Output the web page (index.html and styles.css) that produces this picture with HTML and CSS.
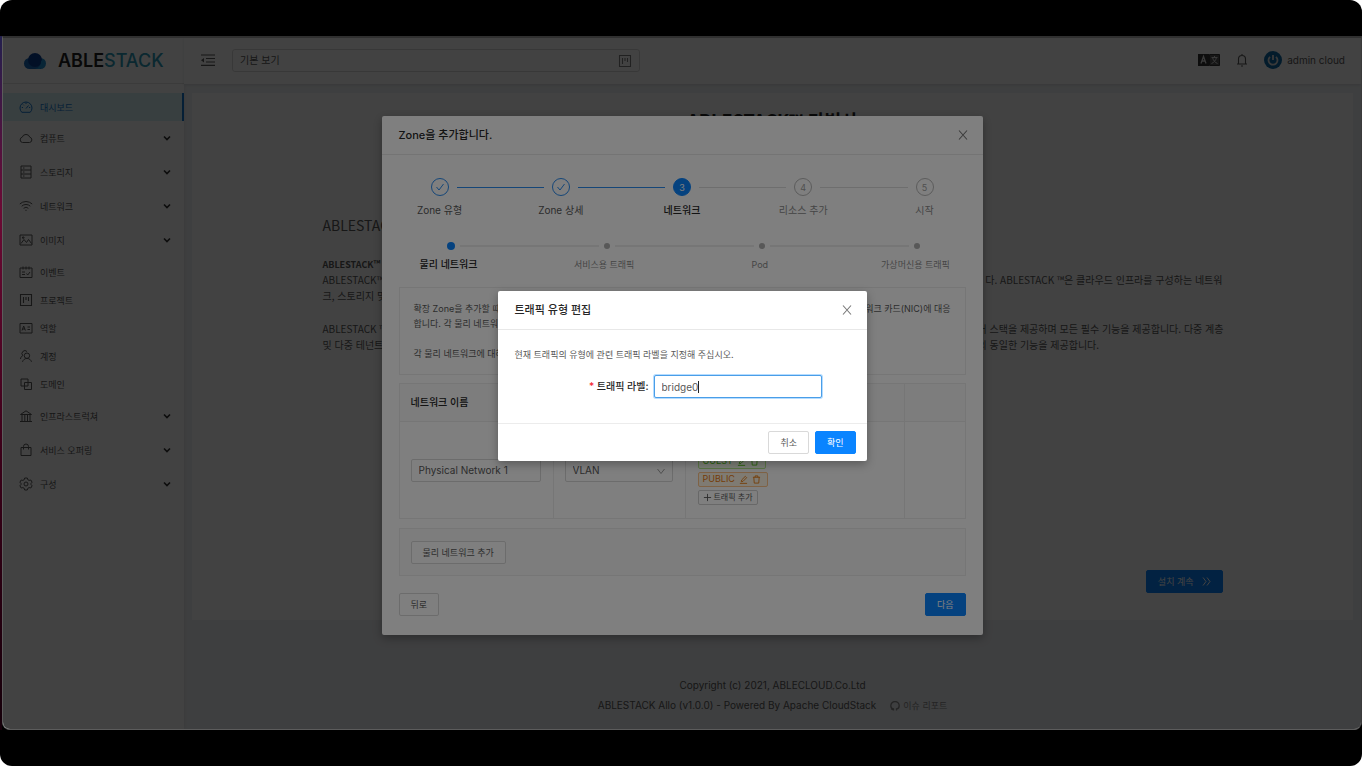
FILE: index.html
```html
<!DOCTYPE html>
<html lang="ko">
<head>
<meta charset="utf-8">
<title>ABLESTACK</title>
<link rel="stylesheet" href="styles.css">
</head>
<body>
<svg class="defs" aria-hidden="true">
  <symbol id="chev" viewBox="0 0 10 10"><path d="M2 3.500l3 3 3-3" fill="none" stroke="currentColor" stroke-width="1.700"/></symbol>
  <symbol id="thin-chev" viewBox="0 0 10 10"><path d="M1.500 3l3.500 4.500L8.500 3" fill="none" stroke="currentColor"/></symbol>
  <symbol id="close" viewBox="0 0 12 12"><path d="M2 1.500l8 9M10 1.500l-8 9" fill="none" stroke="currentColor" stroke-width="1.100"/></symbol>
  <symbol id="project" viewBox="0 0 14 14"><path d="M1.500 1.500h11v11h-11zM4.500 4v6M7 4v3M9.500 4v4" fill="none" stroke="currentColor" stroke-width="1.100"/></symbol>
  <symbol id="check" viewBox="0 0 10 10"><path d="M1.500 5l2.500 3 4.500-6" fill="none" stroke="currentColor"/></symbol>
  <symbol id="edit" viewBox="0 0 10 10"><path d="M2.500 7.500l.5-2L7 1.500l1.500 1.500-4 4zM1 9.300h8" fill="none" stroke="currentColor"/></symbol>
  <symbol id="trash" viewBox="0 0 10 10"><path d="M1 2.500h8M3.500 2.500v-1.500h3v1.500M2 2.500l.5 6.500h5l.5-6.500" fill="none" stroke="currentColor"/></symbol>
</svg>
<div class="screen">
  <div class="edge"></div>
  <div class="app">
    <aside class="side">
      <a class="logo" href="#">
        <svg width="24" height="18" viewBox="0 0 24 18"><circle cx="6.500" cy="11.500" r="5.500" fill="#1769b8"/><circle cx="17.500" cy="11.500" r="5.500" fill="#1f8fd0"/><path d="M6 11h12v6H6z" fill="#1769b8"/><circle cx="12" cy="8" r="7" fill="#0b3f94"/><path d="M12 17a8 8 0 0 0 6-9 5.500 5.500 0 0 1-1 9z" fill="#1f8fd0"/></svg>
        <span><b>ABLE</b><i>STACK</i></span>
      </a>
      <nav>
        <ul class="menu">
          <li><a class="item on" href="#"><svg viewBox="0 0 14 14"><path d="M2.800 12.300a6 6 0 1 1 8.400 0zM7 8.500l2.500-3M7 2.500v1.500M2.800 7.500h1.200M10 7.500h1.200M4 4.500l.8.8" /></svg>대시보드</a></li>
          <li><a class="item sub" href="#"><svg viewBox="0 0 14 14"><path d="M3.500 11.500a2.700 2.700 0 0 1-.3-5.300 4 4 0 0 1 7.600 0 2.700 2.700 0 0 1-.3 5.300z"/></svg>컴퓨트<svg class="arrow"><use href="#chev"/></svg></a></li>
          <li><a class="item sub" href="#"><svg viewBox="0 0 14 14"><path d="M2 1h10v12H2zM2 5h10M2 9h10M4 3h1.500M4 7h1.500M4 11h1.500"/></svg>스토리지<svg class="arrow"><use href="#chev"/></svg></a></li>
          <li><a class="item sub" href="#"><svg viewBox="0 0 14 14"><path d="M.8 5a9 9 0 0 1 12.400 0M2.700 7.200a6.200 6.200 0 0 1 8.600 0M4.600 9.300a3.500 3.500 0 0 1 4.800 0M6.400 11.300h1.200"/></svg>네트워크<svg class="arrow"><use href="#chev"/></svg></a></li>
          <li><a class="item sub" href="#"><svg viewBox="0 0 14 14"><path d="M1 2h12v10H1zM2 10.500l3-4 2.500 3 2-3 3 4M3.500 4h1.500v1.200H3.500z"/></svg>이미지<svg class="arrow"><use href="#chev"/></svg></a></li>
        </ul>
        <ul class="menu plain">
          <li><a class="item" href="#"><svg viewBox="0 0 14 14"><path d="M1 3h12v9.500H1zM4 1.500v3M7 1.500v3M10 1.500v3M3 7h3M3 9.500h3M7.500 8.500l1.200 1.500 2.300-3"/></svg>이벤트</a></li>
          <li><a class="item" href="#"><svg><use href="#project"/></svg>프로젝트</a></li>
          <li><a class="item" href="#"><svg viewBox="0 0 14 14"><path d="M1 2.500h12v9.500H1zM3 9.500l1.700-4.500 1.700 4.500M3.500 8h2.500M8.500 6h2.500M8.500 8.500h2.500"/></svg>역할</a></li>
          <li><a class="item" href="#"><svg viewBox="0 0 14 14"><path d="M8 4a2.700 2.700 0 1 1-.1 5.400A2.700 2.700 0 0 1 8 4zM3.500 12.800c.6-2 2.400-3.400 4.500-3.400s3.900 1.400 4.500 3.400M1.500 10c.2-1.700 1-2.800 2.300-3.400A2.700 2.700 0 1 1 8 2.500"/></svg>계정</a></li>
          <li><a class="item" href="#"><svg viewBox="0 0 14 14"><path d="M2 2h7v7H2zM5.500 5.500h7v7h-7z"/></svg>도메인</a></li>
        </ul>
        <ul class="menu">
          <li><a class="item sub" href="#"><svg viewBox="0 0 14 14"><path d="M1.500 5.500L7 1.800l5.500 3.700zM3 6v6M5.800 6v6M8.500 6v6M11 6v6M1 12.500h12"/></svg>인프라스트럭쳐<svg class="arrow"><use href="#chev"/></svg></a></li>
          <li><a class="item sub" href="#"><svg viewBox="0 0 14 14"><path d="M2 4.500h10v8H2zM4.500 6.500v-3a2.500 2.500 0 0 1 5 0v3"/></svg>서비스 오퍼링<svg class="arrow"><use href="#chev"/></svg></a></li>
          <li><a class="item sub" href="#"><svg viewBox="0 0 14 14"><path d="M5.700 1h2.600l.5 1.700 1.300.7 1.700-.4 1.300 2.200L12 6.500v1l1.100 1.300-1.300 2.200-1.700-.4-1.300.7-.5 1.700H5.700l-.5-1.700-1.300-.7-1.700.4L.9 8.800 2 7.500v-1L.9 5.200 2.200 3l1.700.4 1.300-.7z"/><circle cx="7" cy="7" r="2"/></svg>구성<svg class="arrow"><use href="#chev"/></svg></a></li>
        </ul>
      </nav>
    </aside>
    <div class="main">
      <header class="top">
        <button class="bare" aria-label="메뉴 접기"><svg width="14" height="12" viewBox="0 0 14 12"><path d="M0 1h14M5 4.500h9M5 8h9M0 11.400h14" stroke="currentColor" stroke-width="1.200"/><path d="M3 4v4.500L0 6.200z" fill="currentColor"/></svg></button>
        <div class="view"><select aria-label="보기"><option>기본 보기</option></select><svg><use href="#project"/></svg></div>
        <div class="tools">
          <button class="bare" aria-label="언어"><svg width="22" height="12" viewBox="0 0 22 12"><path d="M0 0h11v12H0z" fill="#333"/><path d="M11.500.5h10v11h-10z" fill="#555" stroke="#333"/><path d="M3 9.500l2.500-7 2.500 7M4 7h3" fill="none" stroke="#ddd" stroke-width="1.300"/><path d="M13.500 3.500h6M16.500 2v1.500M18.500 3.500c-.8 3-2.500 5-5 6M14.500 3.500c.8 3 2.500 5 5 6" fill="none" stroke="#ddd"/></svg></button>
          <button class="bare" aria-label="알림"><svg width="12" height="14" viewBox="0 0 12 14"><path d="M1 11h10M2.500 11V6a3.500 3.500 0 0 1 7 0v5M6 1v1.500M5 13h2" fill="none" stroke="currentColor" stroke-width="1.100"/></svg></button>
          <a class="user" href="#"><svg width="18" height="18" viewBox="0 0 18 18"><circle cx="9" cy="9" r="9" fill="#0d6aa8"/><path d="M6 5.800a4.500 4.500 0 1 0 6 0" fill="none" stroke="#ddd" stroke-width="1.800"/><path d="M9 4v5" stroke="#ddd" stroke-width="1.800"/></svg>admin cloud</a>
        </div>
      </header>
      <main class="card">
        <h1>ABLESTACK™ 마법사</h1>
        <div class="intro">
          <h2>ABLESTACK™</h2>
          <h3>ABLESTACK™ 소개</h3>
          <p><span>ABLESTACK™은</span><span class="end">다. ABLESTACK ™은 클라우드 인프라를 구성하는 네트워</span></p>
          <p class="last"><span>크, 스토리지 및</span></p>
          <p><span>ABLESTACK ™은</span><span class="end">어 스택을 제공하며 모든 필수 기능을 제공합니다. 다중 계층</span></p>
          <p><span>및 다중 테넌트</span><span>의 동일한 기능을 제공합니다.</span></p>
          <button class="btn primary go">설치 계속<svg width="9" height="9" viewBox="0 0 9 9"><path d="M1 .5l3 4-3 4M5 .5l3 4-3 4" fill="none" stroke="currentColor"/></svg></button>
        </div>
      </main>
      <footer class="foot">
        <div>Copyright (c) 2021, ABLECLOUD.Co.Ltd</div>
        <div class="line2"><span>ABLESTACK Allo (v1.0.0) - Powered By Apache CloudStack</span><a href="#"><svg width="10" height="10" viewBox="0 0 10 10"><path d="M3.500 9.500V8C1.500 7.600.8 6.200.8 4.700a4.200 4.200 0 0 1 8.400 0C9.200 6.200 8.500 7.600 6.500 8v1.500M3.500 8.600c-1 .3-1.600-.1-2.200-1" fill="none" stroke="currentColor" stroke-width="1.300"/></svg>이슈 리포트</a></div>
      </footer>
    </div>

    <div class="mask outer">
      <section class="dialog zone" role="dialog" aria-label="Zone을 추가합니다.">
        <div class="head"><strong>Zone을 추가합니다.</strong><button class="bare" aria-label="닫기"><svg width="12" height="12"><use href="#close"/></svg></button></div>
        <div class="body">
          <div class="rail">
            <span class="num done"><svg width="10" height="10"><use href="#check"/></svg></span><hr class="done"><span class="num done"><svg width="10" height="10"><use href="#check"/></svg></span><hr class="done"><span class="num now">3</span><hr><span class="num">4</span><hr><span class="num">5</span>
          </div>
          <ol class="names"><li class="done">Zone 유형</li><li class="done">Zone 상세</li><li class="now">네트워크</li><li>리소스 추가</li><li>시작</li></ol>
          <div class="dots"><span class="dot now"></span><hr><span class="dot"></span><hr><span class="dot"></span><hr><span class="dot"></span></div>
          <ol class="names wide"><li class="now">물리 네트워크</li><li>서비스용 트래픽</li><li>Pod</li><li>가상머신용 트래픽</li></ol>
          <div class="note">
            <p><span>확장 Zone을 추가할 때</span><span>네트워크 카드(NIC)에 대응</span></p>
            <p><span>합니다. 각 물리 네트워크</span></p>
            <p class="gap"><span>각 물리 네트워크에 대해</span></p>
          </div>
          <table>
            <colgroup><col class="c1"><col class="c2"><col class="c3"><col class="c4"></colgroup>
            <thead><tr><th>네트워크 이름</th><th></th><th></th><th></th></tr></thead>
            <tbody><tr>
              <td><input class="field" aria-label="네트워크 이름" value="Physical Network 1"></td>
              <td><div class="pick"><select class="field" aria-label="격리 방법"><option>VLAN</option></select><svg><use href="#thin-chev"/></svg></div></td>
              <td><div class="tags">
                <span class="tag blue">MANAGEMENT</span>
                <span class="tag green">GUEST<svg><use href="#edit"/></svg><svg><use href="#trash"/></svg></span>
                <span class="tag orange">PUBLIC<svg><use href="#edit"/></svg><svg><use href="#trash"/></svg></span>
                <button class="tag add"><svg viewBox="0 0 10 10"><path d="M5 1v8M1 5h8" stroke="currentColor"/></svg>트래픽 추가</button>
              </div></td>
              <td></td>
            </tr></tbody>
          </table>
          <div class="more"><button class="btn">물리 네트워크 추가</button></div>
          <div class="acts"><button class="btn">뒤로</button><button class="btn primary">다음</button></div>
        </div>
      </section>
    </div>

    <div class="mask inner">
      <section class="dialog label" role="dialog" aria-label="트래픽 유형 편집">
        <div class="head"><strong>트래픽 유형 편집</strong><button class="bare" aria-label="닫기"><svg width="12" height="12"><use href="#close"/></svg></button></div>
        <div class="form">
          <p>현재 트래픽의 유형에 관련 트래픽 라벨을 지정해 주십시오.</p>
          <div class="row"><label for="tl"><em>*</em> 트래픽 라벨:</label><div class="entry"><input id="tl" class="field" value="bridge0"><span class="caret"></span></div></div>
        </div>
        <div class="end-acts"><button class="btn">취소</button><button class="btn primary">확인</button></div>
      </section>
    </div>
  </div>
</div>
</body>
</html>
```
FILE: styles.css
```css
* { box-sizing: border-box; }
html { min-height: 100%; display: flow-root; background: #fff; }
body {
  margin: 0;
  min-height: 100vh;
  padding: 36px 0;
  display: flex;
  border-radius: 12px;
  background: #000;
  font: 10px/15px "Inter", "Noto Sans CJK KR", sans-serif;
  color: #595959;
}
.defs { position: absolute; width: 0; height: 0; }
h1, h2, h3, p, ul, ol, hr { margin: 0; padding: 0; }
ul, ol { list-style: none; }
a { color: inherit; text-decoration: none; }
button, input, select { font: inherit; color: inherit; margin: 0; }
.bare { border: 0; background: none; padding: 0; display: flex; }

.screen { flex: 1; display: flex; min-width: 0; }
.edge { width: 2px; background: linear-gradient(#24204e, #6b0a34 25%, #3a0018 60%, #15000a); }
.app {
  position: relative;
  flex: 1;
  display: flex;
  min-width: 0;
  overflow: hidden;
  border: 1px solid #5c5c5c;
  border-top: 2px solid #303030;
  border-right-color: #3a3a3a;
  border-radius: 0 0 8px 8px;
  background: #f0f2f5;
}

.side { width: 181px; background: #fff; box-shadow: 1px 0 3px rgba(0, 0, 0, .06); }
.logo { height: 46px; padding-left: 20px; display: flex; align-items: center; gap: 11px; border-bottom: 1px solid #e4e4e4; }
.logo span { font-size: 18px; line-height: 20px; }
.logo b { font-weight: 600; color: #222; }
.logo i { font-style: normal; font-weight: 500; color: #2b9ab8; }
nav { padding-top: 9px; }
.item { height: 28px; padding: 0 12px 0 16px; display: flex; align-items: center; gap: 7px; font-size: 9px; }
.item svg { width: 14px; height: 14px; fill: none; stroke: currentColor; }
.sub { height: 34px; }
.item .arrow { width: 10px; height: 10px; margin-left: auto; color: #333; stroke: none; }
.on { background: #d8f4f5; color: #1677d2; border-right: 2px solid #1677d2; }
.plain { padding: 1px 0; }

.main { flex: 1; min-width: 0; display: flex; flex-direction: column; }
.top { height: 46px; padding: 0 16px 2px 17px; display: flex; align-items: center; background: #fff; box-shadow: 0 1px 3px rgba(0, 21, 41, .12); }
.view { position: relative; width: 36%; max-width: 408px; margin-left: 17px; }
.view select { width: 100%; height: 23px; padding: 0 7px; border: 1px solid #d9d9d9; border-radius: 3px; background: #fff; appearance: none; }
.view svg { position: absolute; right: 8px; top: 5px; width: 14px; height: 14px; color: #808080; }
.tools { margin-left: auto; display: flex; align-items: center; gap: 16px; }
.user { display: flex; align-items: center; gap: 5px; }
.card { flex: 1; margin: 9px 8px 0; padding: 15px 16px 27px; background: #fff; display: flex; flex-direction: column; }
h1 { font: 700 18px/24px "Noto Sans CJK KR", sans-serif; color: #262626; text-align: center; }
.intro { flex: 1; width: 80%; max-width: 900px; margin: 0 auto; padding-top: 82px; display: flex; flex-direction: column; font: 10px/16px "Noto Sans CJK KR", sans-serif; }
h2 { font-size: 14px; line-height: 22px; font-weight: 400; margin-bottom: 21px; }
h3 { font-size: 9px; line-height: 15px; font-weight: 700; }
.intro p { display: grid; grid-template-columns: 1fr 245px; white-space: nowrap; }
.intro .end { text-align: right; }
.intro .last { margin-bottom: 17px; }
.go { margin-top: auto; align-self: flex-end; display: flex; align-items: center; gap: 8px; }
.foot { height: 109px; padding-top: 58px; text-align: center; }
.line2 { display: flex; justify-content: center; gap: 14px; margin-top: 5px; }
.line2 a { display: flex; align-items: center; gap: 3px; color: #8c8c8c; font-size: 9px; }

.btn { height: 23px; padding: 0 11px; border: 1px solid #d9d9d9; border-radius: 2px; background: #fff; font-size: 9px; line-height: 15px; white-space: nowrap; }
.primary { background: #0a84ff; border-color: #0a84ff; color: #fff; }
.field { width: 100%; height: 23px; padding: 0 7px; border: 1px solid #d9d9d9; border-radius: 2px; background: #fff; appearance: none; display: block; outline: 0; }

.mask { position: absolute; inset: 0; display: flex; justify-content: center; align-items: flex-start; background: rgba(0, 0, 0, .48); }
.outer { padding-top: 78px; }
.inner { padding-top: 253px; background: rgba(0, 0, 0, .5); }
.dialog { background: #fff; border-radius: 2px; box-shadow: 0 3px 10px rgba(0, 0, 0, .3); }
.zone { width: 601px; }
.label { width: 369px; }
.head { height: 39px; padding: 0 14px 0 17px; display: flex; align-items: center; justify-content: space-between; border-bottom: 1px solid #e8e8e8; }
.head strong { font-size: 11px; font-weight: 500; color: #262626; }
.head .bare { color: #777; }
.body { padding: 23px 17px 19px; }
.rail { display: flex; align-items: center; gap: 8px; padding: 0 32px; }
.rail hr { flex: 1; border: 0; border-top: 1px solid #dcdcdc; }
.rail hr.done { border-color: #2a8cf0; }
.num { width: 18px; height: 18px; border: 1px solid #b8b8b8; border-radius: 50%; display: flex; align-items: center; justify-content: center; font-size: 9px; color: #a0a0a0; }
.num.done { border-color: #2a8cf0; color: #2a8cf0; }
.num.now { background: #0a84ff; border-color: #0a84ff; color: #fff; }
.names { display: flex; justify-content: space-between; margin-top: 7px; color: #8c8c8c; text-align: center; }
.names li { width: 82px; }
.names .done { color: #595959; }
.names .now { color: #262626; font-weight: 500; }
.dots { display: flex; align-items: center; gap: 5px; padding: 0 46px 0 48px; margin-top: 24px; height: 8px; }
.dots hr { flex: 1; border: 0; border-top: 2px solid #ececec; }
.dot { width: 6px; height: 6px; border-radius: 50%; background: #b0b0b0; }
.dot.now { width: 8px; height: 8px; background: #0a84ff; }
.wide { font-size: 9px; }
.wide li { width: 100px; }
.wide .now { font-size: 10px; }
.note { margin-top: 15px; padding: 13px 14px; border: 1px solid #ececec; font-size: 9px; }
.note p { display: flex; justify-content: space-between; }
.note .gap { margin-top: 15px; }
table { width: 100%; margin-top: 8px; table-layout: fixed; border-collapse: collapse; border: 1px solid #ececec; border-bottom-color: #d6d6d6; }
.c1 { width: 154px; }
.c2 { width: 132px; }
.c4 { width: 61px; }
th, td { padding: 0 12px 0 11px; border: 1px solid #ececec; text-align: left; }
th { height: 38px; background: #fafafa; color: #262626; font-weight: 500; }
td { height: 97px; }
td:nth-child(3) { padding-left: 12px; }
.pick { position: relative; }
.pick svg { position: absolute; right: 7px; top: 7px; width: 10px; height: 10px; color: #a0a0a0; }
.tags { display: flex; flex-direction: column; align-items: flex-start; gap: 3px; }
.tag { height: 15px; padding: 0 6px 0 4px; display: flex; align-items: center; gap: 4px; border: 1px solid; border-radius: 2px; font-size: 9px; line-height: 12px; }
.tag svg { width: 9px; height: 9px; }
.blue { color: #1677d2; background: #e6f4ff; border-color: #91caff; }
.green { color: #52c41a; background: #f6ffed; border-color: #b7eb8f; }
.orange { color: #e87a10; background: #fff7e6; border-color: #ffc58a; }
.add { padding: 0 4px; gap: 2px; background: #fff; border-color: #d0d0d0; font-size: 8px; }
.more { margin-top: 9px; padding: 12px 11px 11px; border: 1px solid #ececec; background: #fafafa; }
.acts { margin-top: 17px; display: flex; justify-content: space-between; }

.form { padding: 17px; height: 93px; }
.form p { margin-bottom: 13px; font-size: 9px; }
.row { display: flex; align-items: center; justify-content: flex-end; gap: 5px; padding-right: 28px; }
.row label { color: #262626; font-weight: 500; }
.row em { color: #f5222d; font-style: normal; }
.entry { position: relative; width: 168px; }
.entry .field { border-color: #4a9ee8; box-shadow: 0 0 0 1px #b5dcff; }
.caret { position: absolute; left: 44px; top: 6px; width: 1px; height: 12px; background: #222; }
.end-acts { padding: 7px 11px; display: flex; justify-content: flex-end; gap: 6px; border-top: 1px solid #ececec; }
```
